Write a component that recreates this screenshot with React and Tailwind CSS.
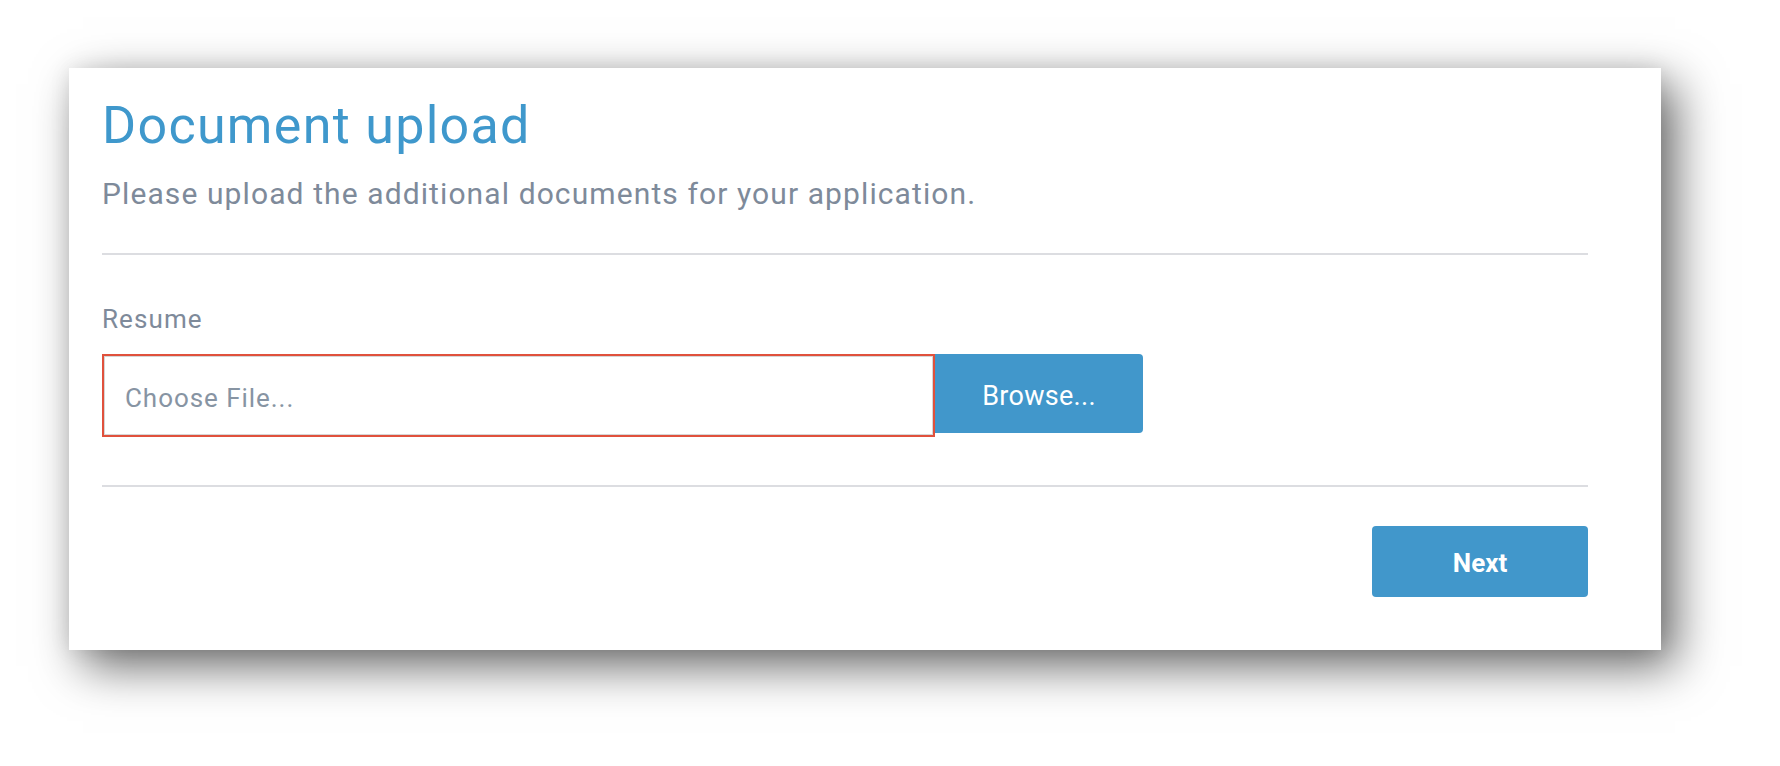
import React from 'react'

export default function App(){
  return (
    <div className="min-h-[766px] bg-white pt-[68px] pl-[69px] font-['Roboto','Liberation_Sans',sans-serif]">
      <div className="w-[1592px] h-[582px] bg-white shadow-[14px_16px_45px_rgba(0,0,0,0.6),0_0_20px_rgba(0,0,0,0.08)] pt-[28px] pl-[33px] pr-[73px] flex flex-col">
        <h1 className="text-[52px] leading-[60px] text-[#3f98cc] tracking-[1.3px]">Document upload</h1>
        <p className="mt-[20px] text-[30px] leading-[36px] text-[#7e8a9a] tracking-[1.1px]">
          Please upload the additional documents for your application.
        </p>
        <div className="mt-[41px] h-[2px] bg-[#dcdde1]" />

        <label className="mt-[48px] text-[26px] leading-[32px] text-[#7e8a9a] tracking-[1.1px]">Resume</label>
        <div className="mt-[19px] flex items-start">
          <div className="w-[833px] h-[83px] border-2 border-[#e0513c] shadow-[inset_0_0_0_1px_#d6d6d6] pl-[21px] pt-[5px] flex items-center text-[26px] text-[#8794a3] tracking-[0.95px]">
            Choose File...
          </div>
          <button className="w-[208px] h-[79px] bg-[#4197cb] rounded-r-[4px] pt-[5px] text-white text-[27px] tracking-[0.3px]">
            Browse...
          </button>
        </div>

        <div className="mt-[48px] h-[2px] bg-[#dcdde1]" />
        <div className="mt-[39px] flex justify-end">
          <button className="w-[216px] h-[71px] bg-[#4197cb] rounded-[4px] pt-[3px] text-white text-[26px] font-bold">
            Next
          </button>
        </div>
      </div>
    </div>
  )
}
